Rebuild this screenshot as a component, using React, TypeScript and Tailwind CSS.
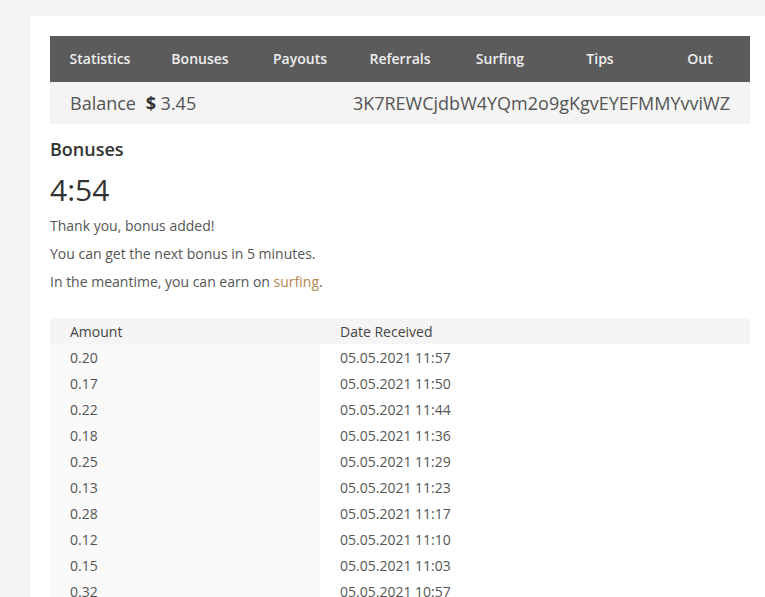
const navItems = ["Statistics", "Bonuses", "Payouts", "Referrals", "Surfing", "Tips", "Out"];

const rows: [string, string][] = [
  ["0.20", "05.05.2021 11:57"],
  ["0.17", "05.05.2021 11:50"],
  ["0.22", "05.05.2021 11:44"],
  ["0.18", "05.05.2021 11:36"],
  ["0.25", "05.05.2021 11:29"],
  ["0.13", "05.05.2021 11:23"],
  ["0.28", "05.05.2021 11:17"],
  ["0.12", "05.05.2021 11:10"],
  ["0.15", "05.05.2021 11:03"],
  ["0.32", "05.05.2021 10:57"],
];

export default function App() {
  return (
    <div className="h-[597px] overflow-hidden bg-[#f4f5f5] pl-[30px] pt-[16px] font-['Open_Sans',sans-serif] text-[#555]">
      <div className="w-[760px] bg-white p-[20px] shadow-[0_0_2px_rgba(0,0,0,0.06)]">
        <div className="w-[700px]">
          <nav className="grid h-[46px] grid-cols-7 items-center bg-[#5b5b5b] pb-[2px]">
            {navItems.map((item) => (
              <a key={item} className="text-center text-[14px] font-semibold text-[#eeeeee]">
                {item}
              </a>
            ))}
          </nav>
          <div className="flex h-[42px] items-center justify-between bg-[#f4f4f4] px-[20px] text-[18px] text-[#555]">
            <div>
              Balance <b className="ml-[5px] text-[#333]">$</b> 3.45
            </div>
            <div>3K7REWCjdbW4YQm2o9gKgvEYEFMMYvviWZ</div>
          </div>

          <h2 className="mt-[12px] text-[18px] font-semibold text-[#333]">Bonuses</h2>
          <div className="mt-[7px] text-[30px] leading-[40px] text-[#333]">4:54</div>
          <div className="mt-[5px] space-y-[6px] text-[14px] leading-[22px] text-[#555]">
            <p>Thank you, bonus added!</p>
            <p>You can get the next bonus in 5 minutes.</p>
            <p>
              In the meantime, you can earn on <a className="text-[#b4874d]">surfing</a>.
            </p>
          </div>

          <table className="mt-[25px] w-full border-collapse text-left text-[14px] text-[#555]">
            <thead>
              <tr className="h-[26px] bg-[#f5f5f5] text-[#444]">
                <th className="w-[270px] pl-[20px] font-normal">Amount</th>
                <th className="pl-[20px] font-normal">Date Received</th>
              </tr>
            </thead>
            <tbody>
              {rows.map(([amount, date]) => (
                <tr key={date} className="h-[26px]">
                  <td className="bg-[#fafafa] pl-[20px]">{amount}</td>
                  <td className="pl-[20px]">{date}</td>
                </tr>
              ))}
            </tbody>
          </table>
        </div>
      </div>
    </div>
  );
}
